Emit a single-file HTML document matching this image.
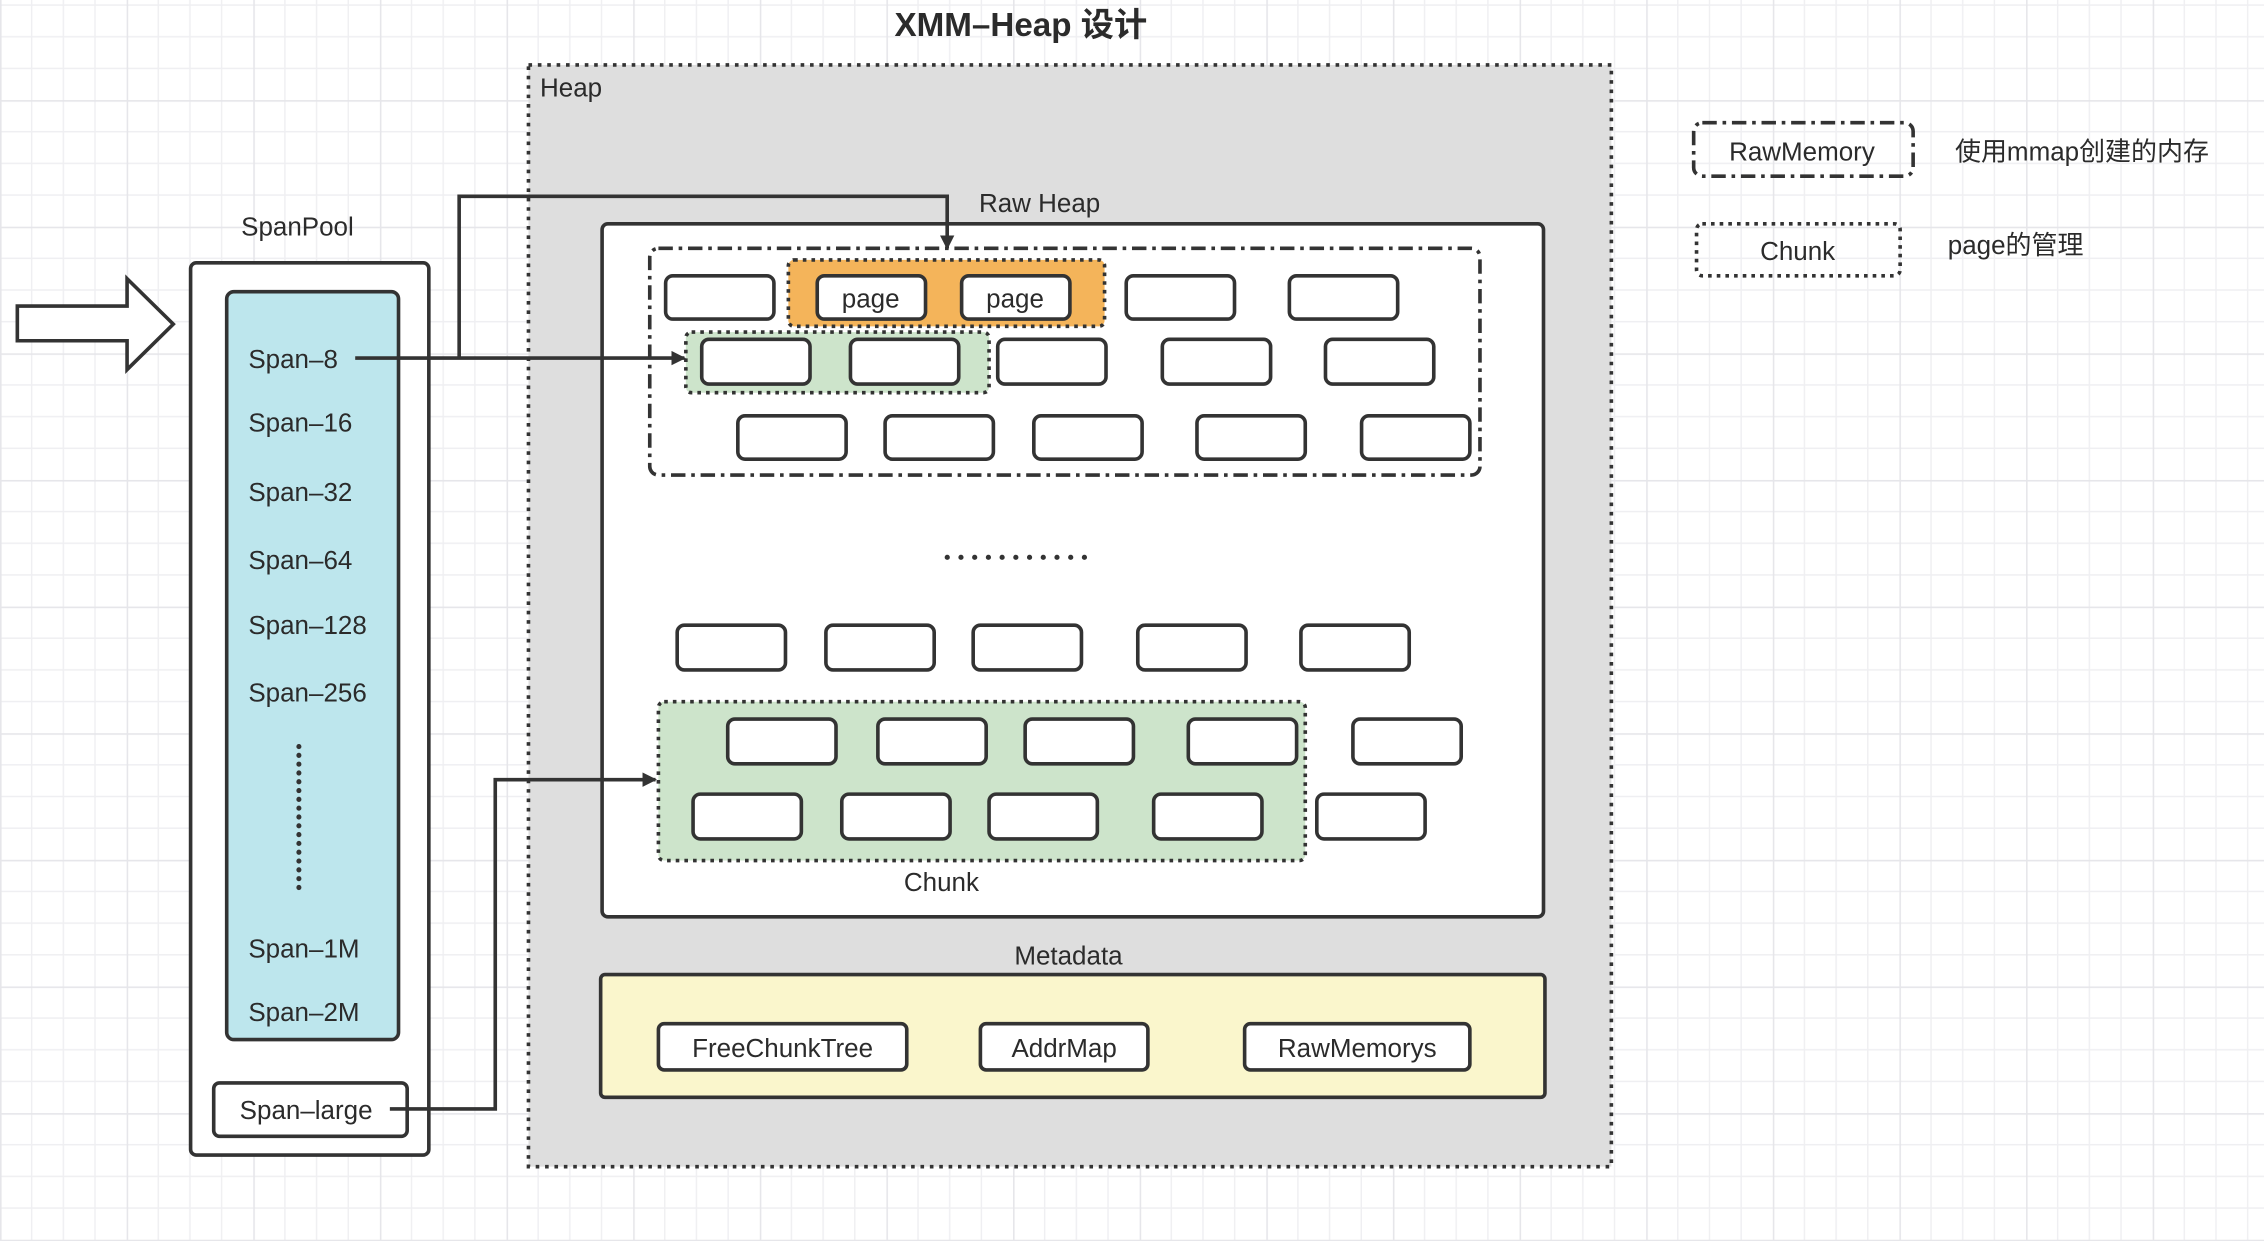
<!DOCTYPE html>
<html><head><meta charset="utf-8"><style>html,body{margin:0;padding:0;background:#fff}svg{display:block}
text{font-family:"Liberation Sans","Noto Sans CJK SC",sans-serif;fill:#2b2b2b}</style></head>
<body>
<svg width="2264" height="1241" viewBox="0 0 1568 859.5" xmlns="http://www.w3.org/2000/svg">
<defs>
<pattern id="g" width="87.7" height="87.7" patternUnits="userSpaceOnUse" x="0" y="-18.4">
<path d="M21.9 0V87.7M43.85 0V87.7M65.8 0V87.7M0 21.9H87.7M0 43.85H87.7M0 65.8H87.7" stroke="#efeff2" stroke-width="1"/>
<path d="M0.5 0V87.7M0 0.5H87.7" stroke="#e6e6ea" stroke-width="1.2"/>
</pattern>
<marker id="ar" markerWidth="10" markerHeight="10" refX="9" refY="5" orient="auto" markerUnits="userSpaceOnUse"><path d="M0 0L10 5L0 10z" fill="#333"/></marker>
</defs>
<rect width="1568" height="860" fill="url(#g)"/>
<text x="707" y="25" font-size="23" text-anchor="middle" font-weight="bold" fill="#333">XMM–Heap 设计</text>

<!-- Heap -->
<rect x="366" y="45" width="750" height="763" fill="#dedede" stroke="#333" stroke-width="2.5" stroke-dasharray="2.5 4"/>
<text x="374" y="67" font-size="18">Heap</text>
<text x="720" y="147" font-size="18" text-anchor="middle">Raw Heap</text>
<rect x="417" y="155" width="652" height="480" rx="4" fill="#fff" stroke="#333" stroke-width="2.5"/>
<rect x="450" y="172" width="575" height="157" rx="6" fill="none" stroke="#333" stroke-width="2.5" stroke-dasharray="10 4 2.5 4"/>
<rect x="546" y="180" width="219" height="46" rx="4" fill="#f4b45a" stroke="#333" stroke-width="2.5" stroke-dasharray="2.5 3.5"/>
<rect x="475" y="230" width="210" height="42" rx="4" fill="#cde4cb" stroke="#333" stroke-width="2.5" stroke-dasharray="2.5 3.5"/>
<rect x="456" y="486" width="448" height="110" rx="4" fill="#cde4cb" stroke="#333" stroke-width="2.5" stroke-dasharray="2.5 3.5"/>
<g fill="#fff" stroke="#333" stroke-width="2.5">
<rect x="461" y="191" width="75" height="30" rx="5"/><rect x="566" y="191" width="75" height="30" rx="5"/><rect x="666" y="191" width="75" height="30" rx="5"/><rect x="780" y="191" width="75" height="30" rx="5"/><rect x="893" y="191" width="75" height="30" rx="5"/>
<rect x="486" y="235" width="75" height="31" rx="5"/><rect x="589" y="235" width="75" height="31" rx="5"/><rect x="691" y="235" width="75" height="31" rx="5"/><rect x="805" y="235" width="75" height="31" rx="5"/><rect x="918" y="235" width="75" height="31" rx="5"/>
<rect x="511" y="288" width="75" height="30" rx="5"/><rect x="613" y="288" width="75" height="30" rx="5"/><rect x="716" y="288" width="75" height="30" rx="5"/><rect x="829" y="288" width="75" height="30" rx="5"/><rect x="943" y="288" width="75" height="30" rx="5"/>
<rect x="469" y="433" width="75" height="31" rx="5"/><rect x="572" y="433" width="75" height="31" rx="5"/><rect x="674" y="433" width="75" height="31" rx="5"/><rect x="788" y="433" width="75" height="31" rx="5"/><rect x="901" y="433" width="75" height="31" rx="5"/>
<rect x="504" y="498" width="75" height="31" rx="5"/><rect x="608" y="498" width="75" height="31" rx="5"/><rect x="710" y="498" width="75" height="31" rx="5"/><rect x="823" y="498" width="75" height="31" rx="5"/><rect x="937" y="498" width="75" height="31" rx="5"/>
<rect x="480" y="550" width="75" height="31" rx="5"/><rect x="583" y="550" width="75" height="31" rx="5"/><rect x="685" y="550" width="75" height="31" rx="5"/><rect x="799" y="550" width="75" height="31" rx="5"/><rect x="912" y="550" width="75" height="31" rx="5"/>
</g>
<text x="603" y="213" font-size="18" text-anchor="middle">page</text>
<text x="703" y="213" font-size="18" text-anchor="middle">page</text>
<line x1="656" y1="386" x2="760" y2="386" stroke="#333" stroke-width="3.5" stroke-dasharray="0.1 9.4" stroke-linecap="round"/>
<text x="652" y="617" font-size="18" text-anchor="middle">Chunk</text>

<text x="740" y="668" font-size="18" text-anchor="middle">Metadata</text>
<rect x="416" y="675" width="654" height="85" rx="3" fill="#faf6cc" stroke="#333" stroke-width="2.5"/>
<g fill="#fff" stroke="#333" stroke-width="2.5">
<rect x="456" y="709" width="172" height="32" rx="4"/><rect x="679" y="709" width="116" height="32" rx="4"/><rect x="862" y="709" width="156" height="32" rx="4"/>
</g>
<text x="542" y="732" font-size="18" text-anchor="middle">FreeChunkTree</text>
<text x="737" y="732" font-size="18" text-anchor="middle">AddrMap</text>
<text x="940" y="732" font-size="18" text-anchor="middle">RawMemorys</text>

<!-- SpanPool -->
<text x="206" y="163" font-size="18" text-anchor="middle">SpanPool</text>
<rect x="132" y="182" width="165" height="618" rx="4" fill="#fff" stroke="#333" stroke-width="2.5"/>
<rect x="157" y="202" width="119" height="518" rx="5" fill="#bde6ed" stroke="#333" stroke-width="2.5"/>
<g font-size="18">
<text x="172" y="255">Span–8</text><text x="172" y="299">Span–16</text><text x="172" y="347">Span–32</text><text x="172" y="394">Span–64</text><text x="172" y="439">Span–128</text><text x="172" y="486">Span–256</text><text x="172" y="663">Span–1M</text><text x="172" y="707">Span–2M</text>
</g>
<line x1="207" y1="517" x2="207" y2="620" stroke="#333" stroke-width="3.5" stroke-dasharray="0.1 6" stroke-linecap="round"/>
<rect x="148" y="750" width="134" height="37" rx="4" fill="#fff" stroke="#333" stroke-width="2.5"/>
<text x="212" y="775" font-size="18" text-anchor="middle">Span–large</text>
<path d="M12 212H88V193L120 224.5L88 256V236H12z" fill="#fff" stroke="#333" stroke-width="2.5" stroke-linejoin="miter"/>

<!-- connectors -->
<g fill="none" stroke="#333" stroke-width="2.5">
<path d="M246 248H474" marker-end="url(#ar)"/>
<path d="M318 248V136H656V172" marker-end="url(#ar)"/>
<path d="M270 768H343V540H454" marker-end="url(#ar)"/>
</g>

<!-- legend -->
<rect x="1173" y="85" width="152" height="37" rx="6" fill="none" stroke="#333" stroke-width="2.5" stroke-dasharray="10 4 2.5 4"/>
<text x="1248" y="111" font-size="18" text-anchor="middle">RawMemory</text>
<text x="1354" y="111" font-size="18">使用mmap创建的内存</text>
<rect x="1175" y="155" width="141" height="36" rx="4" fill="none" stroke="#333" stroke-width="2.5" stroke-dasharray="2.5 3.5"/>
<text x="1245" y="180" font-size="18" text-anchor="middle">Chunk</text>
<text x="1349" y="176" font-size="18">page的管理</text>
</svg>
</body></html>
